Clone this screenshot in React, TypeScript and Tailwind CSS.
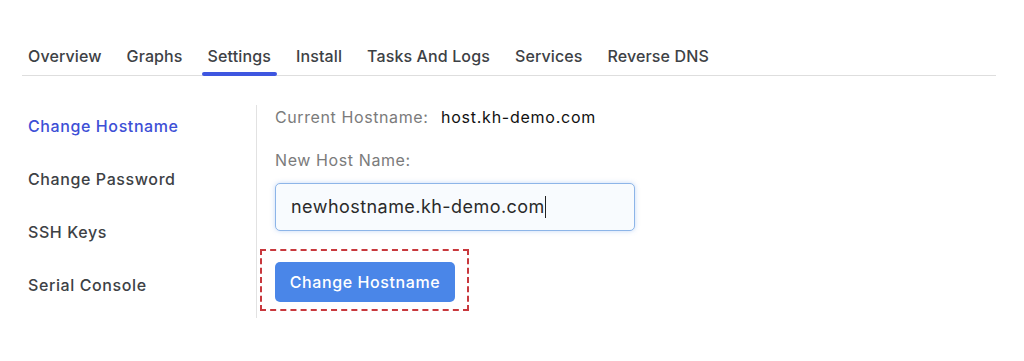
import { useState } from "react";

const TABS = ["Overview", "Graphs", "Settings", "Install", "Tasks And Logs", "Services", "Reverse DNS"];
const SIDE = ["Change Hostname", "Change Password", "SSH Keys", "Serial Console"];

export default function App() {
  const [tab, setTab] = useState("Settings");
  const [side, setSide] = useState("Change Hostname");

  return (
    <div
      className="h-[361px] w-[1024px] bg-white px-[22px] pt-[44px] text-[16px] leading-[24px] tracking-[0.6px]"
      style={{ fontFamily: "Inter, 'Noto Sans', sans-serif" }}
    >
      {/* Tabs */}
      <div className="mr-[6px] flex gap-[13px] border-b border-[#dedede]">
        {TABS.map((t) => (
          <button
            key={t}
            onClick={() => setTab(t)}
            className="relative px-[6px] pb-[7px] font-medium tracking-[0.12px] text-[#3d4145]"
          >
            {t}
            {tab === t && (
              <span className="absolute bottom-[-1px] left-0 right-0 h-[4px] rounded-full bg-[#3e56e0]" />
            )}
          </button>
        ))}
      </div>

      <div className="mt-[29px] flex">
        {/* Sidebar */}
        <div className="flex w-[234px] flex-col gap-[29px] pl-[6px] pt-[9px]">
          {SIDE.map((s) => (
            <button
              key={s}
              onClick={() => setSide(s)}
              className={`text-left font-medium ${side === s ? "text-[#3d4fd6]" : "text-[#3d4145]"}`}
            >
              {s}
            </button>
          ))}
        </div>

        {/* Panel */}
        <div className="flex flex-col border-l border-[#e2e2e2] pb-[7px] pl-[18px]">
          <div className="flex">
            <span className="w-[166px] text-[#7b7b7b]">Current Hostname:</span>
            <span className="tracking-[0.75px] text-[#111]">host.kh-demo.com</span>
          </div>
          <div className="mt-[19px] text-[#7b7b7b]">New Host Name:</div>
          <div className="mt-[11px] flex h-[48px] w-[360px] items-center rounded-[5px] border border-[#8db5e8] bg-[#f8fbfe] pl-[15px] text-[18px] tracking-[0.45px] text-[#2a2a2a] shadow-[0_0_5px_rgba(90,145,230,0.35)]">
            newhostname.kh-demo.com
            <span className="h-[22px] w-[1px] bg-[#222]" />
          </div>
          <div className="ml-[-15px] mt-[18px] self-start border-2 border-dashed border-[#c8383d] pb-[7px] pl-[13px] pr-[12px] pt-[11px]">
            <button className="h-[40px] w-[180px] rounded-[5px] bg-[#4a86e8] font-medium text-white">
              Change Hostname
            </button>
          </div>
        </div>
      </div>
    </div>
  );
}
